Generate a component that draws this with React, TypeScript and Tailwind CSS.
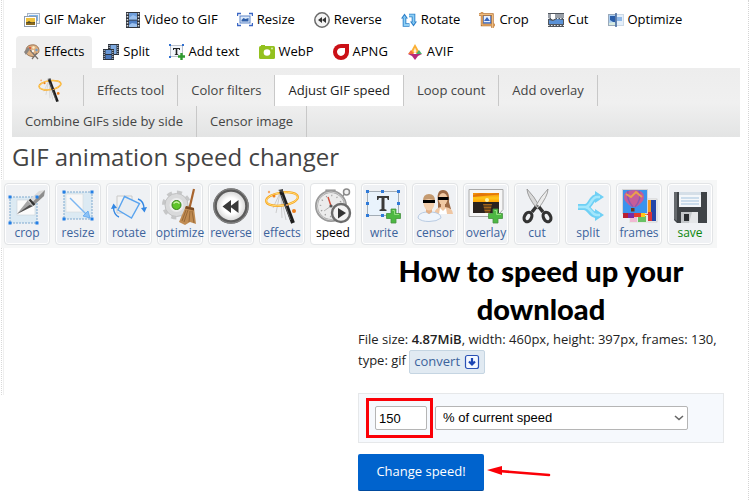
import { ReactNode } from "react";

type Item = { label: string; icon?: ReactNode; active?: boolean; green?: boolean };

/* Small 16px icons for the main menu */

function Small({ children }: { children: ReactNode }) {
  return (
    <svg viewBox="0 0 16 16" className="size-4 shrink-0" aria-hidden="true">
      {children}
    </svg>
  );
}

const makerIcon = (
  <Small>
    <rect x="3.5" y="1.5" width="12" height="10" fill="#eef3fa" stroke="#a9b6c8" />
    <rect x="5" y="3" width="9" height="6" fill="#7db4e8" />
    <rect x=".5" y="4.500" width="12" height="10" fill="#fff" stroke="#8f9cae" />
    <rect x="2" y="6" width="9" height="7" fill="#f0c23c" />
    <path d="M2 10h9v3H2z" fill="#8a6a20" />
    <path d="M2 11l3-2 3 2 3-1v1z" fill="#4d4a2a" />
  </Small>
);

const filmIcon = (
  <Small>
    <rect x="1" width="14" height="16" fill="#30353d" />
    <rect x="4" y="1" width="8" height="6.500" fill="#6f9fdc" />
    <rect x="4" y="8.500" width="8" height="6.500" fill="#4f7fc4" />
    <path d="M4 6l4-3 4 2v2.500H4zM4 13l3-2 5 1v3H4z" fill="#9cc1ee" />
    <path d="M2.500 1v15M13.500 1v15" stroke="#d9dde3" strokeWidth="1.500" strokeDasharray="1.500 1.500" />
  </Small>
);

const resizeSmall = (
  <Small>
    <path d="M.5 4V1.500H4M12 1.500h3.500V4M15.500 11v2.500H12M4 13.500H.5V11" fill="none" stroke="#3a66c4" strokeWidth="1.400" />
    <rect x="3" y="4" width="10" height="7" fill="#dce9fa" stroke="#5f86c8" />
    <path d="M4.500 9.500V8l2-2 2 1 3-1v3.500z" fill="#2f5fa8" />
  </Small>
);

const reverseSmall = (
  <Small>
    <circle cx="8" cy="8" r="7.200" fill="#f4f4f4" stroke="#6a6a6a" strokeWidth="1.500" />
    <path d="M8 5v6L4 8zM12 5v6L8 8z" fill="#333" />
  </Small>
);

const rotateSmall = (
  <Small>
    <path d="M3.500 6v7h5M12.500 10.500v-7H8" fill="none" stroke="#2b7fc9" strokeWidth="3.600" />
    <path d="M0 6.500L3.500 1.500 7 6.500zM9 9.500h7L12.500 14.500z" fill="#2b7fc9" />
    <path d="M3.500 5.500V13h5M12.500 10.500v-7H8" fill="none" stroke="#8fd0f5" strokeWidth="1.800" />
    <path d="M1.800 5.800l1.700-2.200 1.700 2.200zM10.800 10.200h3.400l-1.700 2.200z" fill="#8fd0f5" />
  </Small>
);

const cropSmall = (
  <Small>
    <rect x="4" y="3" width="8" height="8" fill="#e8f1ff" stroke="#3565c0" strokeWidth="1.500" />
    <path d="M5 9l3-4 3 4z" fill="#3565c0" />
    <path d="M3 0v13h13M0 2.500h13.500V16" fill="none" stroke="#b87332" strokeWidth="2.400" />
    <path d="M3 0v13h13M0 2.500h13.500V16" fill="none" stroke="#f0be80" strokeWidth="1" />
  </Small>
);

const cutSmall = (
  <Small>
    <rect y="1" width="16" height="14" fill="#50565e" />
    <rect y="2" width="16" height="4" fill="#9aa0a8" />
    <path d="M1 12V8l4 1 4-2 6 1v4z" fill="#5b92d6" />
    <path d="M0 6.500h16M0 13.500h16" stroke="#e9ecef" strokeDasharray="1.500 1.500" />
    <path d="M3 2h4v4L5 8 3 6z" fill="#fff" />
  </Small>
);

const optimizeSmall = (
  <Small>
    <rect x=".5" y="2.500" width="7" height="11" fill="#a9cdf2" stroke="#9aa9ba" />
    <rect x="8" y="2.500" width="7.500" height="11" fill="#e4effa" stroke="#ccd9e6" />
    <path d="M2 4h5v6H5L2 8z" fill="#2a5da8" />
    <path d="M9 5h5v4H9z" fill="#91b9e8" />
    <path d="M1 11l4-1 3 1v2H1z" fill="#d7eadf" />
    <path d="M8 1v14" stroke="#325a96" strokeWidth="1.400" />
  </Small>
);

const paletteIcon = (
  <Small>
    <path d="M7 1c5-1 8 2 8 5.500S12 10 11 11s-1 2-3 1.500C5 12 2 11 2 7s2-5.500 5-6z" fill="#dcb083" stroke="#8a6344" strokeWidth=".8" />
    <path d="M6 6l8 9M13 9l-5 6" stroke="#77706b" strokeWidth="1.200" />
    <circle cx="6" cy="4" r="1.200" fill="#e05a3a" />
    <circle cx="9.500" cy="3.500" r="1.200" fill="#fff1c8" />
    <circle cx="12.500" cy="6" r="1.200" fill="#6d9bc8" />
    <circle cx="9" cy="7" r="1.200" fill="#fbf4e8" />
    <path d="M0 8l4-5 2 2-4 6z" fill="#8b8580" />
  </Small>
);

const splitSmall = (
  <Small>
    <rect x="5" width="11" height="11" fill="#2c333d" />
    <rect x="7.500" y="1" width="6" height="9" fill="#7eaae0" />
    <path d="M6.200 1v10M14.800 1v10" stroke="#ccd4de" strokeDasharray="1 1" />
    <rect y="5" width="11" height="11" fill="#2c333d" />
    <rect x="2.500" y="6" width="6" height="4" fill="#6897d6" />
    <rect x="2.500" y="11" width="6" height="4" fill="#4b79bd" />
    <path d="M1.200 6v10M9.800 6v10" stroke="#ccd4de" strokeDasharray="1 1" />
  </Small>
);

const textSmall = (
  <Small>
    <rect x="1.500" y="1.500" width="12" height="11" fill="#f4f8fd" stroke="#7c8594" strokeDasharray="1 1" />
    <path d="M4 4h7v2h-.8L9.800 5H8.300v5l1 .6v.4H5.700v-.4l1-.6V5H5.200l-.4 1H4z" fill="#222" />
    <path d="M0 0h2v2H0zM13 0h2v2h-2zM0 12h2v2H0z" fill="#2f6fd0" />
    <path d="M12.500 9v7M9 12.500h7" stroke="#2f9a2f" strokeWidth="2.400" />
  </Small>
);

const webpIcon = (
  <Small>
    <rect y="2" width="16" height="13" rx="1.500" fill="#93c11f" />
    <path d="M2 2.500V1h4v1.500z" fill="#93c11f" />
    <circle cx="8" cy="8.500" r="3.300" fill="#fff" />
    <circle cx="13" cy="4.500" r="1" fill="#d9edaa" />
  </Small>
);

const apngIcon = (
  <Small>
    <path d="M8 0h8v8a8 8 0 1 1-8-8z" fill="#cb1016" />
    <path d="M8.500 4H12v4a4 4 0 1 1-3.500-4z" fill="#fff" />
  </Small>
);

const avifIcon = (
  <Small>
    <path d="M8 0l5 9H3z" fill="#fbb034" />
    <path d="M4 6l3 4H1z" fill="#f0703a" />
    <path d="M12 6l3 4H9z" fill="#4aaf6b" />
    <path d="M1 10h14l-4 2-3 4-3-4z" fill="#b52a7c" />
    <path d="M8 4.500v5M6.500 7h3" stroke="#fff" strokeWidth="1.200" />
  </Small>
);

/* Wand with the swirling ring, used in the sub menu and the toolbar */
const wandShapes = (
  <>
    <path d="M17 6l-7 15M17 6l-4 20M18 9l1 22M18 9l5 24" stroke="#c4c4c4" strokeWidth=".8" />
    <ellipse cx="19" cy="12" rx="16" ry="6.500" fill="none" stroke="#f7a11a" strokeWidth="2.200" transform="rotate(-8 19 12)" />
    <ellipse cx="19" cy="12" rx="16" ry="6.500" fill="none" stroke="#ffe07a" strokeWidth=".9" transform="rotate(-8 19 12)" />
    <path d="M18 4l12 32" stroke="#1d1d1d" strokeWidth="4" />
    <path d="M18.500 8l9 25" stroke="#777" strokeWidth=".8" />
    <path d="M15 3l5-1v4z" fill="#444" />
    <circle cx="31" cy="24" r="2" fill="#ee7f1c" />
    <circle cx="11" cy="9" r="1.500" fill="#ee7f1c" />
    <circle cx="6" cy="5" r="1.200" fill="#f6a867" />
    <circle cx="24" cy="18" r="1" fill="#f6a867" />
  </>
);

/* Large toolbar icons */

function Large({ children }: { children: ReactNode }) {
  return (
    <svg viewBox="0 0 38 38" className="size-[38px] shrink-0" aria-hidden="true">
      {children}
    </svg>
  );
}

const plusShape = (
  <>
    <path d="M26 22h5v4.500h4.500v5H31V36h-5v-4.500h-4.500v-5H26z" fill="#4db843" stroke="#46933f" strokeWidth=".8" />
    <path d="M27.500 23.500h2v4h4.500" fill="none" stroke="#93df7f" />
  </>
);

const cropIcon = (
  <Large>
    <rect x="2" y="10" width="27" height="26" fill="#dceaf3" stroke="#7fa9cf" strokeDasharray="2 1" />
    <rect x="9" y="13" width="18" height="15" fill="#fbfbfb" stroke="#c9d2d9" strokeWidth=".6" />
    <path d="M9 27L20 13l5 6z" fill="#a5a5a5" />
    <path d="M9 27l12.500-9 3.500 1z" fill="#4d4d4d" />
    <path d="M20 14L31 4l6-1-1 6-11 10z" fill="#dadada" />
    <path d="M25 19l11-10 1-6-14 13.500z" fill="#8d8d8d" />
    <path d="M21.500 12.500l5 5.500" stroke="#333" strokeWidth="2.200" />
    <path d="M.5 8.500h3v3h-3zM27.500 8.500h3v3h-3zM.5 34.500h3v3h-3zM27.500 34.500h3v3h-3z" fill="#237fe6" />
  </Large>
);

const resizeIcon = (
  <Large>
    <rect x="5" y="5" width="28" height="27" fill="#dceaf3" stroke="#7fa9cf" strokeDasharray="2 1" />
    <rect x="7" y="7" width="17" height="18" fill="#f7f7f7" stroke="#d4dade" strokeWidth=".6" />
    <path d="M11 11l17 17" stroke="#7bb6f2" strokeWidth="1.400" />
    <path d="M31 31l-7-2L29 24z" fill="#8cc2f5" stroke="#5aa4ef" strokeWidth=".8" />
    <path d="M3.500 3.500h3v3h-3zM31.500 3.500h3v3h-3zM3.500 30.500h3v3h-3zM31.500 30.500h3v3h-3z" fill="#237fe6" />
  </Large>
);

const rotateIcon = (
  <Large>
    <path d="M7 9h15v17H7z" fill="#f3f3f3" stroke="#c9c9c9" />
    <path d="M14.500 9.500l15 7-8 14.500-13.500-8z" fill="#e8edf2" stroke="#5aa4ef" strokeWidth="1.400" />
    <path d="M28 12q6 2 6 10" fill="none" stroke="#3387e3" strokeWidth="1.400" />
    <path d="M31 21l3.500 4.500L37 20z" fill="#3387e3" />
    <path d="M9 30q-5-2-5.500-9" fill="none" stroke="#3387e3" strokeWidth="1.400" />
    <path d="M1 22l2.500-5.500L7 21z" fill="#3387e3" />
  </Large>
);

const optimizeIcon = (
  <Large>
    <circle cx="15.500" cy="18" r="12.500" fill="none" stroke="#c6c7c8" strokeWidth="4" strokeDasharray="5 4.820" />
    <circle cx="15.500" cy="18" r="11.500" fill="#d9dadb" stroke="#c0c1c2" />
    <circle cx="15.500" cy="18" r="7" fill="#eceded" />
    <circle cx="15.500" cy="18" r="4.500" fill="#5fc52b" stroke="#35821a" />
    <path d="M12.500 16.500q3-3 6 0" stroke="#c8f3a4" fill="none" strokeWidth="1.400" />
    <path d="M33 2l-4.500 19" stroke="#a8652f" strokeWidth="2.200" />
    <path d="M25 19l8 2 2 16-6-2-5 3-6-3z" fill="#c08b51" />
    <path d="M25 19l8 2v2.500l-9-2z" fill="#7c4b22" />
    <path d="M27 23l-4 12M29 24l-1 11M31 24l2 12M25 23l-4 11" stroke="#8d5f31" strokeWidth=".8" />
  </Large>
);

const reverseIcon = (
  <Large>
    <defs>
      <radialGradient id="disc">
        <stop offset=".5" stopColor="#ffffff" />
        <stop offset="1" stopColor="#cfcfcf" />
      </radialGradient>
    </defs>
    <circle cx="19" cy="19" r="16" fill="url(#disc)" stroke="#5c5c5c" strokeWidth="3.600" />
    <circle cx="19" cy="19" r="17" fill="none" stroke="#8a8a8a" strokeWidth="1" />
    <path d="M19 13v13l-8.500-6.500zM26.500 13v13L18 19.500z" fill="#3a3a3a" />
  </Large>
);

const effectsIcon = <Large>{wandShapes}</Large>;

const speedIcon = (
  <Large>
    <circle cx="32.500" cy="5" r="3" fill="#f3f3f3" stroke="#8a8a8a" strokeWidth="1.500" />
    <path d="M28 10l2.500-3M12 3h9v2h-9z" stroke="#8a8a8a" fill="#bbb" strokeWidth="1.200" />
    <circle cx="17" cy="19" r="14.500" fill="#ececec" stroke="#9a9a9a" strokeWidth="3" />
    <circle cx="17" cy="19" r="14" fill="none" stroke="#d0d0d0" />
    <circle cx="17" cy="19" r="10.500" fill="none" stroke="#999" strokeWidth="1.500" strokeDasharray="1 4.500" />
    <path d="M17 19l-3-9" stroke="#d0523f" strokeWidth="1.500" />
    <path d="M17 19l-7 5" stroke="#b5b5b5" />
    <circle cx="17" cy="19" r="1.600" fill="#555" />
    <circle cx="27" cy="26" r="9" fill="#f3f3f3" stroke="#6c6c6c" strokeWidth="2.400" />
    <path d="M24 21l8 5-8 5.500z" fill="#333" />
  </Large>
);

const writeIcon = (
  <Large>
    <rect x="2.500" y="4.500" width="31" height="24" fill="#e9f3fc" stroke="#a3adb6" />
    <path d="M12 9h12v4h-1.200l-.8-2h-2.500v11l2 .8V24h-7v-1.200l2-.8V11H14l-.8 2H12z" fill="#3a3a3a" />
    <path d="M1 3h3v3H1zM16 3h3v3h-3zM32 3h3v3h-3zM1 15h3v3H1zM32 15h3v3h-3zM1 27h3v3H1zM16 27h3v3h-3z" fill="#2f7ad9" />
    {plusShape}
  </Large>
);

const censorIcon = (
  <Large>
    <path d="M22 16q-2-13 5-13t6 12l2 7H22z" fill="#9d6a45" />
    <ellipse cx="27" cy="12" rx="4.500" ry="6" fill="#f0c8a2" />
    <path d="M18 27q1-6 7-7v-3h4v3q8 1 8 7z" fill="#efc6a2" />
    <path d="M24 21l3 3 3-3 1 6h-8z" fill="#fff" />
    <path d="M2 31q0-5 8-6l3 1.500 3-1.500q9 1 9 6-4 3.500-12 3.500T2 31z" fill="#eff5fc" stroke="#b9cbe2" />
    <path d="M10 21h6v4l-3 2-3-2z" fill="#e3b087" />
    <ellipse cx="13" cy="16" rx="5.500" ry="7.500" fill="#f3cfad" />
    <path d="M7 14q0-7 6-7t6 7q-6-4-12 0z" fill="#c49a70" />
    <path d="M7 13h12v3H7zM22 10h10.500v3H22z" fill="#000" />
  </Large>
);

const overlayIcon = (
  <Large>
    <defs>
      <linearGradient id="dusk" x2="0" y2="1">
        <stop offset="0" stopColor="#f28a05" />
        <stop offset=".5" stopColor="#ffc61a" />
        <stop offset="1" stopColor="#ff9b00" />
      </linearGradient>
    </defs>
    <path d="M2 2.500h34v20l-6 7H2z" fill="#f6f6f6" stroke="#aaa" />
    <rect x="6" y="6" width="26" height="10" fill="url(#dusk)" />
    <path d="M6 8l8-2 8 1 10-1v1.500l-11 1L6 10z" fill="#e2760a" />
    <rect x="6" y="15" width="26" height="11" fill="#2a221e" />
    <path d="M16 17h9l-2 9h-5z" fill="#a3641a" />
    <path d="M15 19h11M16 22h9M17 25h7" stroke="#2a221e" />
    <circle cx="20" cy="13" r="2" fill="#fff3a6" />
    {plusShape}
  </Large>
);

const cutIcon = (
  <Large>
    <path d="M9 2q0 7 10 20l3-2Q16 9 9 2z" fill="#d9d9d9" stroke="#8b8b8b" strokeWidth=".8" />
    <path d="M30 2q0 7-10 20l-3-2Q23 9 30 2z" fill="#ececec" stroke="#8b8b8b" strokeWidth=".8" />
    <path d="M18 20l-4 5M21 20l4 5" stroke="#333" strokeWidth="3.500" />
    <ellipse cx="10" cy="30" rx="3.500" ry="5" fill="none" stroke="#333" strokeWidth="3.200" transform="rotate(28 10 30)" />
    <ellipse cx="29" cy="30" rx="3.500" ry="5" fill="none" stroke="#333" strokeWidth="3.200" transform="rotate(-28 29 30)" />
    <circle cx="19.500" cy="19" r="1.200" fill="#777" />
  </Large>
);

const splitIcon = (
  <Large>
    <path d="M9 20h7q3 0 6-5t6-5" fill="none" stroke="#6fd0f5" strokeWidth="6" />
    <path d="M15 20q3 0 6 4t7 4" fill="none" stroke="#6fd0f5" strokeWidth="6" />
    <path d="M26 4l9 6-9 6zM26 22l9 6-9 6z" fill="#6fd0f5" />
    <path d="M9 20h8q2 0 5-5t6-5h3M16 20q3 0 6 4t6 4h3" fill="none" stroke="#a4e7fc" strokeWidth="2.500" />
  </Large>
);

const framesIcon = (
  <Large>
    <rect x="24" y="12" width="13" height="23" fill="#f7f7f7" stroke="#bbb" strokeWidth=".6" />
    <path d="M25 13h6v21h-6z" fill="#f49a1c" />
    <path d="M31 13h5v21h-5z" fill="#2445a8" />
    <path d="M27 25h5v9h-5z" fill="#d8333a" />
    <path d="M9 28h19v8H9z" fill="#e6eae4" />
    <path d="M10 30h7v5h-7z" fill="#f0b9d3" />
    <path d="M18 29h8v6h-8z" fill="#69c265" />
    <rect x="2.500" y="2.500" width="25" height="24" fill="#3a93ec" stroke="#d5d5d5" />
    <path d="M4 10q0-7 10-7t10 7q0 5-8 10h-4Q4 15 4 10z" fill="#c65d99" />
    <path d="M8 4q-2 8 5 16M19 4q3 8-4 16" stroke="#8d58b0" fill="none" strokeWidth="1.500" />
    <path d="M6 7l5 3 5-5 6 5" stroke="#e9a24a" fill="none" strokeWidth="2" />
    <rect x="11" y="21" width="3.500" height="3.500" fill="#6b3a1c" />
    <path d="M3 26h5v5H3z" fill="#b92030" />
    <path d="M8 26h6v5H8z" fill="#7b2ba3" />
    <path d="M14 26h7v4h-7z" fill="#e33b2f" />
    <path d="M21 26h4v4h-4z" fill="#ffc91a" />
  </Large>
);

const saveIcon = (
  <Large>
    <path d="M3 5h33v31H6l-3-3z" fill="#3f4347" />
    <path d="M3 5h3v29l-3-2z" fill="#65696d" />
    <rect x="8" y="5" width="22" height="15" fill="#f4f7fa" />
    <path d="M8 5h22v3H8z" fill="#d5dfe8" />
    <path d="M10 11h18M10 14h18M10 17h18" stroke="#a3c3de" />
    <rect x="10" y="25" width="17" height="11" fill="#c3c6c9" />
    <rect x="13" y="27" width="5" height="7" fill="#2b2e31" />
    <path d="M21 25h6v11h-9z" fill="#e4e6e8" />
  </Large>
);

const MENU: Item[][] = [
  [
    { label: "GIF Maker", icon: makerIcon },
    { label: "Video to GIF", icon: filmIcon },
    { label: "Resize", icon: resizeSmall },
    { label: "Reverse", icon: reverseSmall },
    { label: "Rotate", icon: rotateSmall },
    { label: "Crop", icon: cropSmall },
    { label: "Cut", icon: cutSmall },
    { label: "Optimize", icon: optimizeSmall },
  ],
  [
    { label: "Effects", icon: paletteIcon, active: true },
    { label: "Split", icon: splitSmall },
    { label: "Add text", icon: textSmall },
    { label: "WebP", icon: webpIcon },
    { label: "APNG", icon: apngIcon },
    { label: "AVIF", icon: avifIcon },
  ],
];

const SUBMENU: Item[] = [
  { label: "Effects tool" },
  { label: "Color filters" },
  { label: "Adjust GIF speed", active: true },
  { label: "Loop count" },
  { label: "Add overlay" },
  { label: "Combine GIFs side by side" },
  { label: "Censor image" },
];

const TOOLS: Item[] = [
  { label: "crop", icon: cropIcon },
  { label: "resize", icon: resizeIcon },
  { label: "rotate", icon: rotateIcon },
  { label: "optimize", icon: optimizeIcon },
  { label: "reverse", icon: reverseIcon },
  { label: "effects", icon: effectsIcon },
  { label: "speed", icon: speedIcon, active: true },
  { label: "write", icon: writeIcon },
  { label: "censor", icon: censorIcon },
  { label: "overlay", icon: overlayIcon },
  { label: "cut", icon: cutIcon },
  { label: "split", icon: splitIcon },
  { label: "frames", icon: framesIcon },
  { label: "save", icon: saveIcon, green: true },
];

function MainMenu() {
  return (
    <nav className="px-4 pt-1">
      {MENU.map((row, i) => (
        <ul key={i} className="flex gap-[3px]">
          {row.map((item) => (
            <li key={item.label}>
              <a
                href="#"
                className={`flex h-8 items-center gap-1 rounded-t-sm px-2 text-[13px] font-medium text-black ${item.active ? "bg-[#eeeeee]" : ""}`}
              >
                {item.icon}
                {item.label}
              </a>
            </li>
          ))}
        </ul>
      ))}
    </nav>
  );
}

function SubMenu() {
  return (
    <ul className="mr-2 ml-3 flex flex-wrap bg-linear-to-b from-[#ededed] via-[#f0f0f0] to-[#e3e4e4] pt-[7px] text-[13px] text-[#444]">
      <li className="flex h-[31px] w-[72px] justify-center border-r border-[#c8c8c8]">
        <svg viewBox="0 0 38 38" className="mt-0.5 ml-1 size-[26px]" aria-hidden="true">
          {wandShapes}
        </svg>
      </li>
      {SUBMENU.map((item) => (
        <li key={item.label}>
          <a
            href="#"
            className={`flex h-[31px] items-center border-r border-[#c8c8c8] px-[13px] ${item.active ? "bg-white text-[#222]" : ""}`}
          >
            {item.label}
          </a>
        </li>
      ))}
    </ul>
  );
}

function Toolbar() {
  return (
    <div className="relative flex w-fit gap-[5px] bg-[#f6f7f7] py-[3px] pr-1 pl-[3px]">
      {TOOLS.map((tool) => (
        <a
          key={tool.label}
          href="#"
          className={`flex h-[62px] w-[46px] flex-col items-center rounded border border-[#e2e4e6] pt-[3px] text-[12px] leading-4 inset-ring inset-ring-white ${tool.active ? "bg-white text-black" : tool.green ? "bg-[#eff1f4] text-[#0b860b]" : "bg-[#eff1f4] text-[#3c639c]"}`}
        >
          {tool.icon}
          {tool.label}
        </a>
      ))}
    </div>
  );
}

function SpeedForm() {
  return (
    <form onSubmit={(e) => e.preventDefault()}>
      <div className="mt-[22px] flex h-[50px] items-center border border-[#e6e8ea] bg-[#f6f9fd] pl-[7px]">
        <div className="border-[3px] border-[#fb0007] py-[5px] pr-[3px] pl-1.5">
          <input
            type="text"
            aria-label="Speed"
            defaultValue="150"
            className="block h-6 w-[52px] rounded-xs border border-[#b5b5b5] bg-white px-[3px] font-['Liberation_Sans',sans-serif] text-[13px] leading-5 text-black"
          />
        </div>
        <div className="relative ml-0.5">
          <select
            aria-label="Unit"
            className="block h-6 w-[253px] appearance-none rounded-xs border border-[#b5b5b5] bg-white px-[7px] font-['Liberation_Sans',sans-serif] text-[13px] leading-5 text-black"
          >
            <option>% of current speed</option>
          </select>
          <svg viewBox="0 0 10 6" className="pointer-events-none absolute top-[9px] right-1 h-[6px] w-[10px]" aria-hidden="true">
            <path d="M1 1l4 3.500L9 1" fill="none" stroke="#666" strokeWidth="1.600" />
          </svg>
        </div>
      </div>
      <div className="mt-[11px] flex items-start">
        <button
          type="submit"
          className="h-[37px] w-[126px] rounded-xs border-b border-[#004a9e] bg-[#0063cd] text-[13px] font-medium text-white"
        >
          Change speed!
        </button>
        <svg viewBox="0 0 64 14" className="mt-[11px] ml-[3px] h-[14px] w-16" aria-hidden="true">
          <path d="M12 6l50 4" stroke="#fb0007" strokeWidth="2.600" strokeLinecap="round" />
          <path d="M0 5l15-4v9z" fill="#fb0007" />
        </svg>
      </div>
    </form>
  );
}

export default function App() {
  return (
    <div className="relative min-h-screen bg-white pr-px font-['Open_Sans',sans-serif]">
      {/* Faint double rule along the left edge */}
      <div className="absolute top-0 left-px h-[395px] w-[3px] border-r border-l border-r-[#f0f0f0] border-l-[#d9d9d9] [border-left-style:dotted]" />
      <div className="min-h-screen border-r border-dotted border-[#d4d4d4]">
        <MainMenu />
        <SubMenu />
        <h1 className="mb-[3px] ml-3 h-10 text-[24px] leading-10 text-[#444]">GIF animation speed changer</h1>
        <div className="pl-px">
          <Toolbar />
        </div>
        <main className="mr-6 ml-[358px] text-[13px] text-[#222]">
          <p className="pt-1 text-center font-['Lato',sans-serif] text-[29px] leading-[38px] font-black text-black">
            How to speed up your download
          </p>
          <p className="pt-px leading-[21px] whitespace-nowrap">
            File size: <strong className="font-semibold">4.87MiB</strong>, width: 460px, height: 397px, frames: 130,
            <br />
            type: gif{" "}
            <a href="#" className="-my-1 inline-flex h-6 items-center gap-1 rounded-xs border border-[#c5d5e2] bg-[#e1eaf2] px-1 align-middle text-[#3c639c]">
              convert
              <svg viewBox="0 0 16 16" className="size-4" aria-hidden="true">
                <rect x="1.500" y="1.500" width="13" height="13" rx="2" fill="#f4f8ff" stroke="#2a51b5" strokeWidth="1.200" />
                <path d="M8 4v6M5 7.500L8 10.500l3-3" fill="none" stroke="#1c46b4" strokeWidth="2.200" />
              </svg>
            </a>
          </p>
          <SpeedForm />
        </main>
      </div>
    </div>
  );
}
